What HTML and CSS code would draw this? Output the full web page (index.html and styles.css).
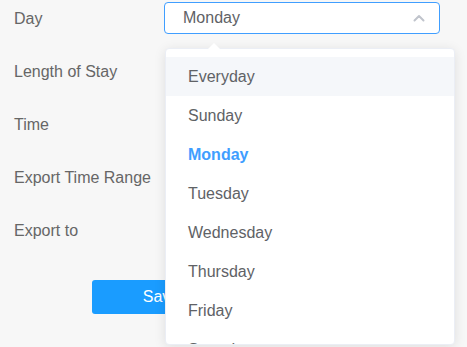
FILE: index.html
```html
<!DOCTYPE html>
<html lang="en">

<head>
    <meta charset="UTF-8">
    <meta name="viewport" content="width=device-width, initial-scale=1.0">
    <title>Export Settings</title>
    <link rel="stylesheet" href="styles.css">
</head>

<body>
    <!-- Export form -->
    <div class="form">
        <div class="form-row">
            <label class="form-label">Day</label>
            <div class="form-control">
                <div class="select is-open">
                    <span class="select-value">Monday</span>
                    <svg class="select-arrow" width="12" height="8" viewBox="0 0 12 8">
                        <polyline points="1.5,6.5 6,2 10.5,6.5" fill="none" stroke="#c0c4cc" stroke-width="2" stroke-linecap="round" stroke-linejoin="round"/>
                    </svg>
                </div>

                <!-- Dropdown menu -->
                <div class="dropdown">
                    <span class="dropdown-caret"></span>
                    <ul class="dropdown-list">
                        <li class="dropdown-item hover">Everyday</li>
                        <li class="dropdown-item">Sunday</li>
                        <li class="dropdown-item selected">Monday</li>
                        <li class="dropdown-item">Tuesday</li>
                        <li class="dropdown-item">Wednesday</li>
                        <li class="dropdown-item">Thursday</li>
                        <li class="dropdown-item">Friday</li>
                        <li class="dropdown-item">Saturday</li>
                    </ul>
                </div>
            </div>
        </div>

        <div class="form-row">
            <label class="form-label">Length of Stay</label>
            <div class="form-control"></div>
        </div>

        <div class="form-row">
            <label class="form-label">Time</label>
            <div class="form-control"></div>
        </div>

        <div class="form-row">
            <label class="form-label">Export Time Range</label>
            <div class="form-control"></div>
        </div>

        <div class="form-row">
            <label class="form-label">Export to</label>
            <div class="form-control"></div>
        </div>

        <div class="form-actions">
            <button class="btn-primary">Save</button>
        </div>
    </div>
</body>

</html>
```

FILE: styles.css
```css
/* Reset and Global Styles */
* {
    margin: 0;
    padding: 0;
    box-sizing: border-box;
}

html,
body {
    height: 100%;
}

body {
    font-family: "Liberation Sans", Arial, sans-serif;
    font-size: 16px;
    background-color: #f7f7f7;
}

/* Form */
.form {
    padding: 2px 0 0 14px;
}

.form-row {
    display: flex;
    align-items: center;
    height: 32px;
    margin-bottom: 21px;
}

.form-label {
    width: 150px;
    padding-top: 2px;
    color: #666;
}

.form-control {
    position: relative;
    width: 276px;
    height: 32px;
}

/* Select */
.select {
    display: flex;
    align-items: center;
    justify-content: space-between;
    height: 32px;
    padding: 0 14px 0 18px;
    background-color: #fff;
    border: 1px solid #409eff;
    border-radius: 4px;
}

.select-value {
    color: #606266;
}

/* Dropdown */
.dropdown {
    position: absolute;
    top: 46px;
    left: 1px;
    width: 290px;
    height: 297px;
    background-color: #fff;
    border: 1px solid #ebeef5;
    border-radius: 4px;
    box-shadow: 0 2px 12px rgba(0, 0, 0, 0.1);
    z-index: 10;
}

.dropdown-caret {
    position: absolute;
    top: -6px;
    left: 42px;
    width: 0;
    height: 0;
    border-left: 6px solid transparent;
    border-right: 6px solid transparent;
    border-bottom: 6px solid #fff;
}

.dropdown-list {
    list-style: none;
    height: 100%;
    padding-top: 8px;
    overflow: hidden;
    border-radius: 4px;
}

.dropdown-item {
    height: 39px;
    line-height: 39px;
    padding-left: 22px;
    color: #606266;
}

.dropdown-item.hover {
    background-color: #f5f7fa;
}

.dropdown-item.selected {
    color: #409eff;
    font-weight: bold;
}

/* Actions */
.form-actions {
    padding: 13px 0 0 78px;
}

.btn-primary {
    width: 138px;
    height: 34px;
    font-family: inherit;
    font-size: 16px;
    color: #fff;
    background-color: #1a9cff;
    border: none;
    border-radius: 3px;
    cursor: pointer;
}
```
